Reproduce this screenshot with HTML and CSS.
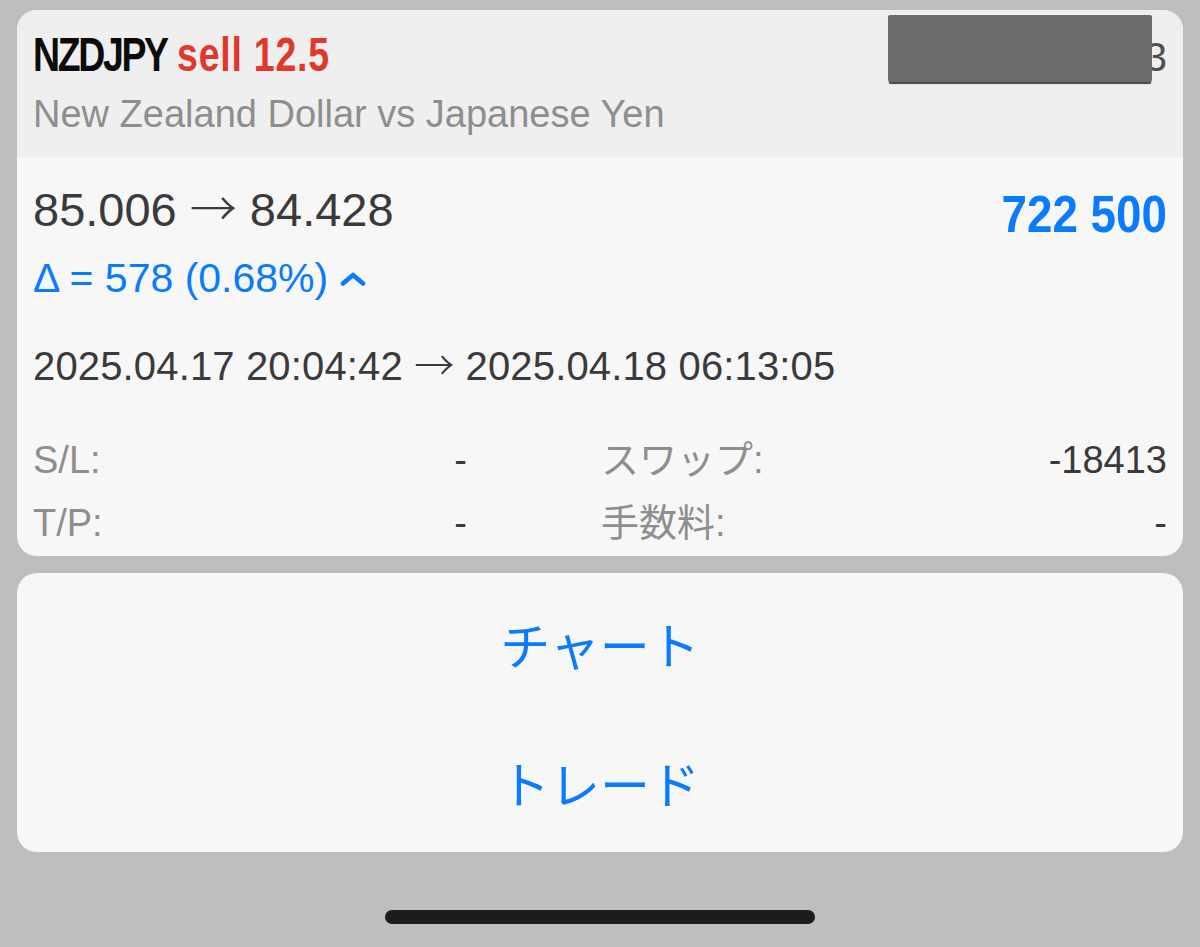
FILE: index.html
```html
<!DOCTYPE html>
<html lang="ja">
<head>
<meta charset="utf-8">
<title>NZDJPY</title>
<link rel="stylesheet" href="styles.css">
</head>
<body>
<div class="screen">
  <section class="card">
    <header class="card-head">
      <div class="titles">
        <div class="title"><span class="sym">NZDJPY</span> <span class="side">sell 12.5</span></div>
        <div class="subtitle">New Zealand Dollar vs Japanese Yen</div>
      </div>
      <div class="ticket">3</div>
      <div class="redact"></div>
    </header>
    <div class="card-body">
      <div class="price-row">
        <div class="prices">85.006 <span class="arr">→</span> 84.428</div>
        <div class="profit">722 500</div>
      </div>
      <div class="delta">Δ = 578 (0.68%)
        <svg class="caret" width="26" height="14" viewBox="0 0 26 14"><path d="M3 11.5 L13 3 L23 11.5" fill="none" stroke="#0a7aff" stroke-width="4.6" stroke-linecap="round" stroke-linejoin="round"/></svg>
      </div>
      <div class="dates">2025.04.17 20:04:42 <span class="arr">→</span> 2025.04.18 06:13:05</div>
      <div class="stats">
        <span class="lbl">S/L:</span><span class="val">-</span>
        <span class="lbl right">スワップ:</span><span class="val">-18413</span>
        <span class="lbl">T/P:</span><span class="val">-</span>
        <span class="lbl right">手数料:</span><span class="val">-</span>
      </div>
    </div>
  </section>
  <section class="card actions">
    <div class="action">チャート</div>
    <div class="action">トレード</div>
  </section>
  <div class="home-bar"></div>
</div>
</body>
</html>
```
FILE: styles.css
```css
html, body {
  margin: 0;
  padding: 0;
  background: #bebebe;
}
body {
  font-family: "Liberation Sans", Arial, "Noto Sans CJK JP", sans-serif;
  width: 1200px;
  height: 947px;
  overflow: hidden;
}
.screen {
  padding: 10px 17px 0;
  display: flex;
  flex-direction: column;
}
.card {
  background: #f7f7f7;
  border-radius: 20px;
  overflow: hidden;
}
.card-head {
  position: relative;
  background: #efefef;
  display: flex;
  justify-content: space-between;
  align-items: flex-start;
  padding: 17px 16px 19px 16px;
}
.title {
  display: inline-block;
  white-space: nowrap;
  font-family: "Liberation Sans", Arial, sans-serif;
  font-weight: bold;
  font-size: 48px;
  line-height: 56px;
  color: #0c0c0c;
  transform: scaleX(0.78);
  transform-origin: left center;
}
.sym { letter-spacing: -3px; }
.side { color: #e0392b; letter-spacing: 1px; }
.subtitle {
  margin-top: 7px;
  font-size: 38px;
  line-height: 48px;
  color: #8e8e8e;
}
.ticket {
  font-size: 40px;
  line-height: 56px;
  color: #4f4f4f;
  margin-top: 2px;
}
.redact {
  position: absolute;
  top: 5px;
  right: 31px;
  width: 264px;
  height: 67px;
  background: #6b6b6b;
  border-radius: 2px;
  box-shadow: 0 3px 1px -1px #45454f;
}
.card-body {
  padding: 25px 16px 1px 16px;
  color: #3a3a3c;
}
.arr {
  font-family: "Noto Sans CJK JP", sans-serif;
  font-weight: 300;
  line-height: 1;
}
.price-row {
  display: flex;
  justify-content: space-between;
  align-items: flex-start;
}
.prices {
  font-size: 47px;
  line-height: 56px;
}
.profit {
  margin-top: 4px;
  font-family: "Liberation Sans", Arial, sans-serif;
  font-weight: bold;
  font-size: 52px;
  line-height: 56px;
  color: #0a7aff;
  transform: scaleX(0.88);
  transform-origin: right center;
}
.delta {
  margin-top: 8px;
  font-size: 41px;
  line-height: 56px;
  color: #0a7aff;
  display: flex;
  align-items: center;
}
.caret {
  margin-left: 12px;
  margin-top: 2px;
}
.dates {
  margin-top: 32px;
  font-size: 40px;
  line-height: 56px;
  letter-spacing: 0.15px;
}
.stats {
  margin-top: 35px;
  display: grid;
  grid-template-columns: 200px 234px 300px 1fr;
  font-size: 38px;
  line-height: 63px;
}
.stats .lbl { color: #8e8e8e; }
.stats .lbl.right { padding-left: 134px; }
.stats .val { text-align: right; color: #3a3a3c; }
.actions {
  margin-top: 17px;
  display: flex;
  flex-direction: column;
}
.action {
  height: 139.5px;
  display: flex;
  align-items: center;
  justify-content: center;
  font-family: "Noto Sans CJK JP", sans-serif;
  font-size: 50px;
  color: #0a7aff;
}
.home-bar {
  align-self: center;
  margin-top: 58px;
  width: 430px;
  height: 14px;
  border-radius: 7px;
  background: #1c1c1c;
}
```
